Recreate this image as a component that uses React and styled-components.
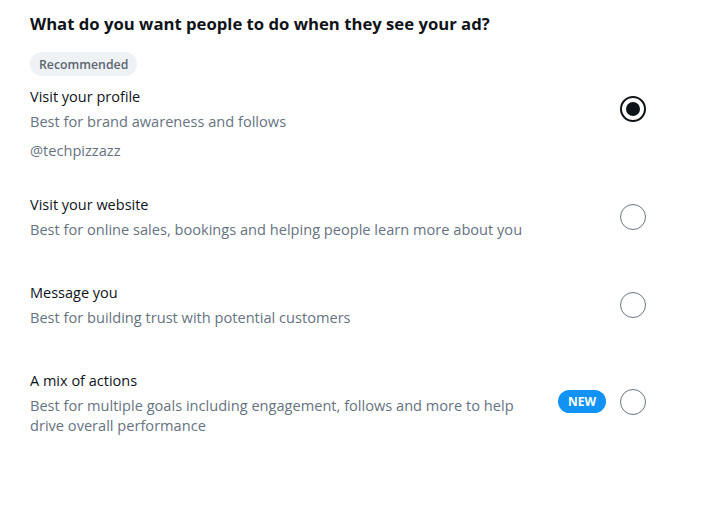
import React, { useState } from "react"
import styled, { createGlobalStyle } from "styled-components"

const GlobalStyle = createGlobalStyle`
  body {
    margin: 0;
    background: #ffffff;
    font-family: "Open Sans", "Noto Sans", sans-serif;
    color: #0f1419;
  }
`

const Page = styled.div`
  width: 701px;
  padding: 12px 55px 0 30px;
  box-sizing: border-box;
`

const Heading = styled.h2`
  margin: 0;
  font-size: 16.7px;
  line-height: 24px;
  font-weight: 700;
  color: #0f1419;
`

const Pill = styled.span`
  display: inline-flex;
  align-items: center;
  height: 24px;
  padding: 0 9px;
  border-radius: 12px;
  background: #eff2f4;
  color: #5b6670;
  font-size: 12.3px;
  font-weight: 600;
  margin-top: 16px;
`

const List = styled.div`
  display: flex;
  flex-direction: column;
  margin-top: 11px;
`

const Option = styled.label`
  display: flex;
  flex-direction: column;
  padding-bottom: ${p => (p.$last ? 0 : 44)}px;
  cursor: pointer;
`

const Row = styled.div`
  display: flex;
  align-items: center;
  gap: 16px;
`

const Text = styled.div`
  flex: 1;
  min-width: 0;
`

const Title = styled.div`
  font-size: 14.5px;
  line-height: 20px;
  color: #0f1419;
`

const Desc = styled.div`
  margin-top: 4px;
  font-size: 14.6px;
  line-height: 20px;
  color: #66737f;
  max-width: ${p => (p.$narrow ? "500px" : "none")};
`

const Handle = styled.div`
  margin-top: 9px;
  margin-bottom: -9px;
  font-size: 14.6px;
  line-height: 20px;
  color: #66737f;
`

const Side = styled.div`
  display: flex;
  align-items: center;
  gap: 14px;
  margin-top: ${p => (p.$lift ? -3 : 0)}px;
`

const NewBadge = styled.span`
  display: inline-flex;
  align-items: center;
  height: 23px;
  padding: 0 10px;
  border-radius: 12px;
  background: #1193f5;
  color: #ffffff;
  font-size: 12px;
  font-weight: 700;
`

const Radio = styled.span`
  width: 26px;
  height: 26px;
  box-sizing: border-box;
  border-radius: 50%;
  border: ${p => (p.$checked ? "2px solid #0f1419" : "1.5px solid #6b7580")};
  display: flex;
  align-items: center;
  justify-content: center;
  flex-shrink: 0;

  &::after {
    content: "";
    display: ${p => (p.$checked ? "block" : "none")};
    width: 14px;
    height: 14px;
    border-radius: 50%;
    background: #0f1419;
  }
`

const options = [
  {
    id: "profile",
    title: "Visit your profile",
    desc: "Best for brand awareness and follows",
    handle: "@techpizzazz",
  },
  {
    id: "website",
    title: "Visit your website",
    desc: "Best for online sales, bookings and helping people learn more about you",
  },
  {
    id: "message",
    title: "Message you",
    desc: "Best for building trust with potential customers",
  },
  {
    id: "mix",
    title: "A mix of actions",
    desc: "Best for multiple goals including engagement, follows and more to help drive overall performance",
    isNew: true,
  },
]

export default function App() {
  const [selected, setSelected] = useState("profile")
  return (
    <Page>
      <GlobalStyle />
      <Heading>What do you want people to do when they see your ad?</Heading>
      <Pill>Recommended</Pill>
      <List>
        {options.map((o, i) => (
          <Option key={o.id} $last={i === options.length - 1} onClick={() => setSelected(o.id)}>
            <Row>
              <Text>
                <Title>{o.title}</Title>
                <Desc $narrow={o.isNew}>{o.desc}</Desc>
              </Text>
              <Side $lift={o.isNew}>
                {o.isNew && <NewBadge>NEW</NewBadge>}
                <Radio $checked={selected === o.id} />
              </Side>
            </Row>
            {o.handle && <Handle>{o.handle}</Handle>}
          </Option>
        ))}
      </List>
    </Page>
  )
}
